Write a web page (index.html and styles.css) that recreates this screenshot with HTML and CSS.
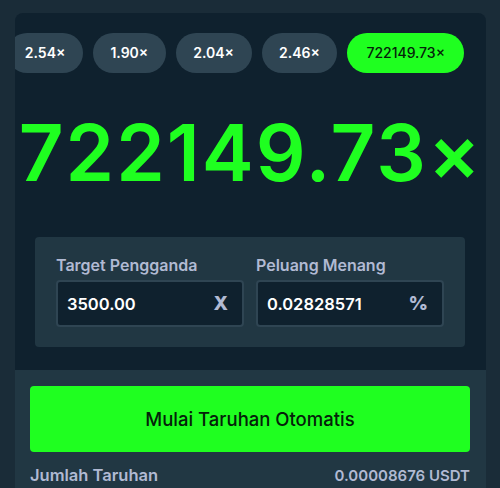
FILE: index.html
```html
<!DOCTYPE html>
<html lang="id">
<head>
    <meta charset="UTF-8">
    <meta name="viewport" content="width=device-width, initial-scale=1.0">
    <title>Limbo</title>
    <link rel="stylesheet" href="styles.css">
</head>
<body>
    <div class="wrap">
        <div class="game">
            <div class="history">
                <span class="pill">2.54×</span>
                <span class="pill">1.90×</span>
                <span class="pill">2.04×</span>
                <span class="pill">2.46×</span>
                <span class="pill win">722149.73×</span>
            </div>
            <div class="result">722149.73×</div>
            <div class="form">
                <div class="field">
                    <label>Target Pengganda</label>
                    <div class="input">
                        <span>3500.00</span>
                        <span class="suffix">X</span>
                    </div>
                </div>
                <div class="field">
                    <label>Peluang Menang</label>
                    <div class="input">
                        <span>0.02828571</span>
                        <span class="suffix">%</span>
                    </div>
                </div>
            </div>
        </div>
        <div class="controls">
            <button class="start">Mulai Taruhan Otomatis</button>
            <div class="row">
                <span class="name">Jumlah Taruhan</span>
                <span>0.00008676 USDT</span>
            </div>
        </div>
    </div>
</body>
</html>
```

FILE: styles.css
```css
body {
    margin: 0;
    background-color: #1a2c38;
    font-family: Inter, "Noto Sans", sans-serif;
    height: 488px;
    overflow: hidden;
}
.wrap {
    padding: 13px 14px 0 15px;
}
.game {
    background-color: #0f212e;
    border-radius: 8px 8px 0 0;
    height: 357px;
    padding-top: 20px;
    box-sizing: border-box;
}
.history {
    display: flex;
    justify-content: flex-end;
    gap: 10px;
    padding-right: 22px;
    overflow: hidden;
}
.pill {
    flex-shrink: 0;
    height: 40px;
    line-height: 40px;
    padding: 0 17.5px;
    border-radius: 20px;
    background-color: #2f4553;
    color: #fff;
    font-size: 14px;
    font-weight: 600;
}
.pill.win {
    padding: 0 19px;
    background-color: #1fff20;
    color: #05210a;
    font-weight: 500;
}
.result {
    text-align: center;
    color: #1fff20;
    font-size: 78px;
    font-weight: 600;
    line-height: 80px;
    margin: 40px 0 44px;
    letter-spacing: 2px;
}
.form {
    margin: 0 21px 0 20px;
    background-color: #213743;
    border-radius: 4px;
    padding: 18px 21px 20px;
    display: flex;
    gap: 12px;
}
.field {
    flex: 1;
}
.field label {
    display: block;
    color: #b1bad3;
    font-size: 16px;
    font-weight: 600;
    line-height: 20px;
    margin-bottom: 5px;
}
.input {
    height: 47px;
    box-sizing: border-box;
    border: 2px solid #2f4553;
    border-radius: 4px;
    background-color: #0f212e;
    display: flex;
    align-items: center;
    justify-content: space-between;
    padding: 0 14px 0 9px;
    color: #fff;
    font-size: 16.5px;
    font-weight: 600;
}
.suffix {
    color: #b1bad3;
    font-size: 19px;
    font-weight: 800;
}
.controls {
    background-color: #213743;
    padding: 16px 16px 0 15px;
    height: 118px;
}
.start {
    display: block;
    width: 100%;
    height: 66px;
    border: none;
    border-radius: 4px;
    background-color: #1fff20;
    color: #05210a;
    font-family: inherit;
    font-size: 18.5px;
    font-weight: 500;
    cursor: pointer;
}
.row {
    display: flex;
    justify-content: space-between;
    align-items: baseline;
    margin-top: 13px;
    color: #b1bad3;
    font-size: 15px;
    font-weight: 600;
}
.row .name {
    font-size: 16.5px;
}
```
